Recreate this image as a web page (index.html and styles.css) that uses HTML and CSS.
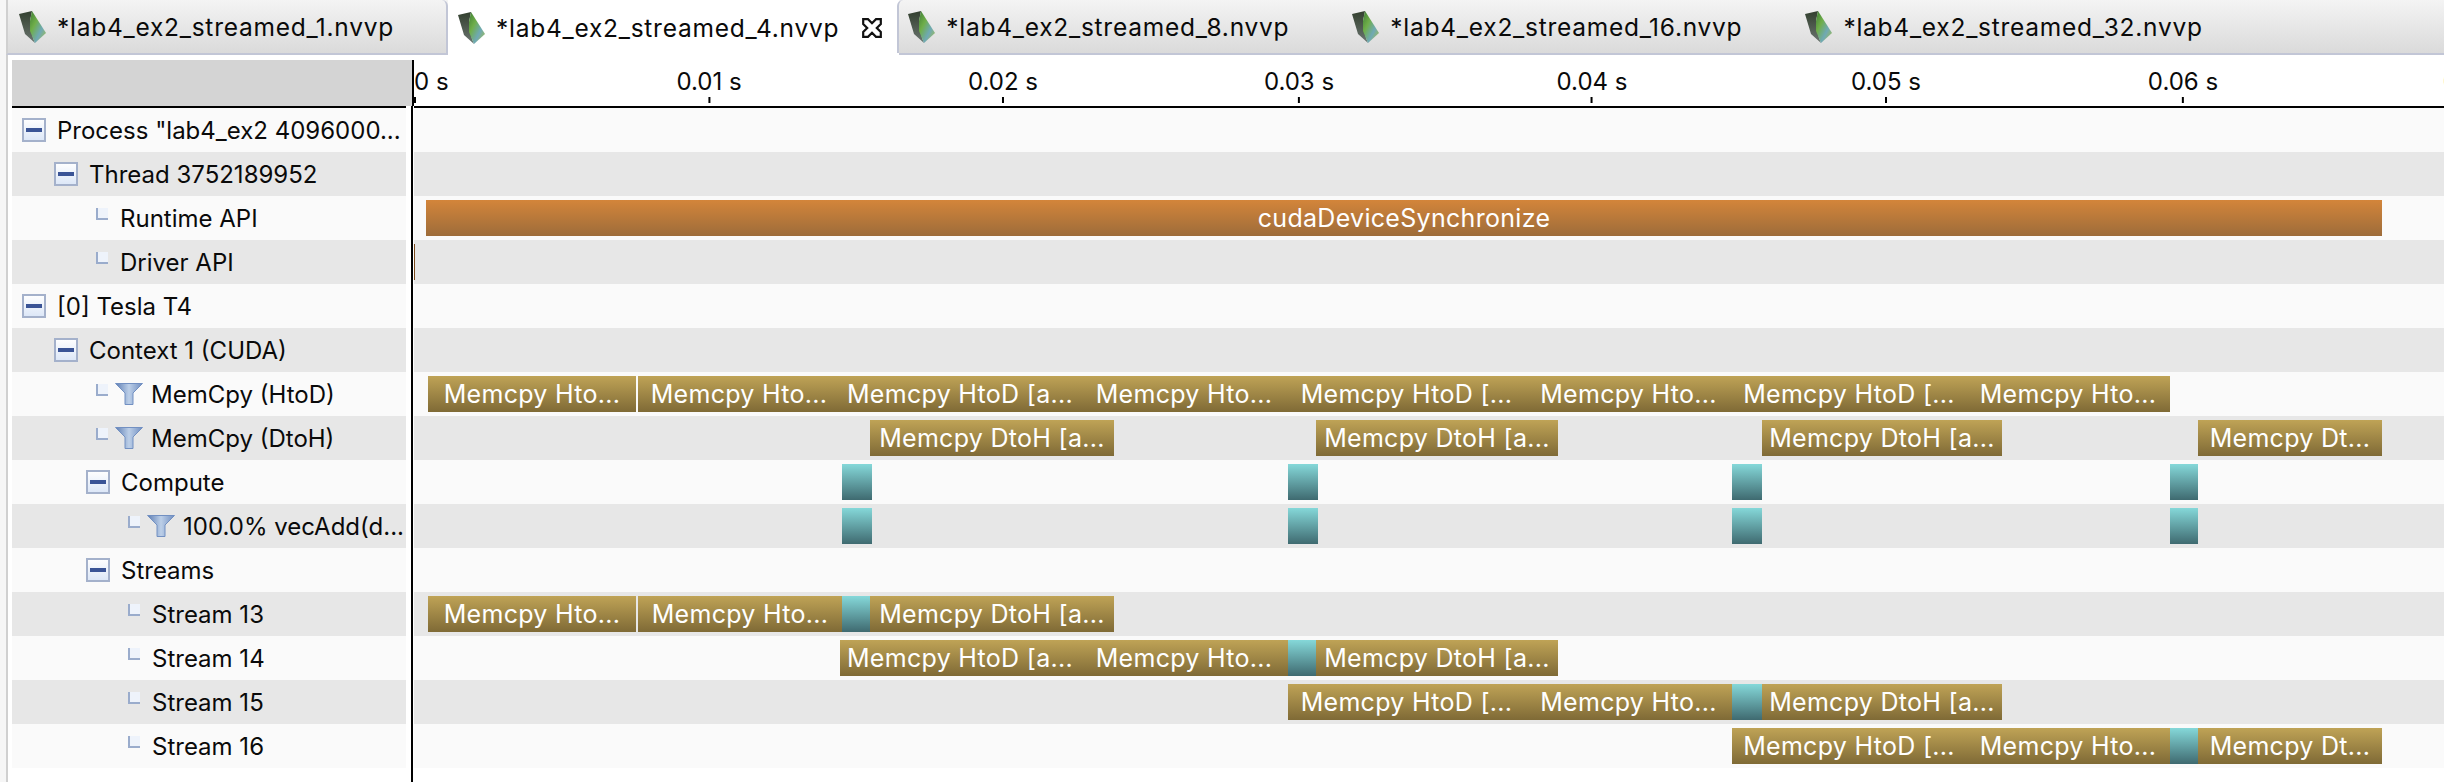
FILE: index.html
```html
<!DOCTYPE html>
<html lang="en">
<head>
    <meta charset="UTF-8">
    <meta name="viewport" content="width=device-width, initial-scale=1.0">
    <title>lab4_ex2_streamed_4.nvvp</title>
    <link rel="stylesheet" href="styles.css">
</head>
<body>
    <!-- shared icons -->
    <svg class="icon-defs" aria-hidden="true">
        <defs>
            <linearGradient id="nvvp-body" x1="0" y1="0" x2="1" y2="1">
                <stop offset="0" stop-color="#3f7f35"/>
                <stop offset="0.35" stop-color="#6fae4a"/>
                <stop offset="0.65" stop-color="#6fa9b5"/>
                <stop offset="1" stop-color="#a9c23a"/>
            </linearGradient>
            <linearGradient id="nvvp-edge" x1="0" y1="0" x2="0" y2="1">
                <stop offset="0" stop-color="#33402f"/>
                <stop offset="1" stop-color="#6b7570"/>
            </linearGradient>
            <linearGradient id="funnel-fill" x1="0" y1="0" x2="1" y2="0">
                <stop offset="0" stop-color="#5d7db3"/>
                <stop offset="0.5" stop-color="#bccfe8"/>
                <stop offset="1" stop-color="#6f8dc0"/>
            </linearGradient>
            <linearGradient id="toggle-fill" x1="0" y1="0" x2="0" y2="1">
                <stop offset="0" stop-color="#ffffff"/>
                <stop offset="1" stop-color="#dbe6f7"/>
            </linearGradient>
        </defs>
        <symbol id="nvvp" viewBox="0 0 28 32">
            <polygon points="1,3 14,0 12,10 15,27 17,32 7,23" fill="url(#nvvp-edge)"/>
            <polygon points="14,0 28,22 17,32 12,20 12,10" fill="url(#nvvp-body)"/>
        </symbol>
        <symbol id="funnel" viewBox="0 0 28 22">
            <polygon points="0.5,0.5 27.5,0.5 18,10 18,21.5 10,21.5 10,10" fill="url(#funnel-fill)" stroke="#7290c2"/>
        </symbol>
        <symbol id="toggle" viewBox="0 0 24 24">
            <rect x="1" y="1" width="22" height="22" fill="url(#toggle-fill)" stroke="#a4b1cb" stroke-width="2"/>
            <rect x="4" y="10" width="16" height="4" fill="#3a5496"/>
        </symbol>
    </svg>

    <div class="tabs">
        <div class="tab tab-first"><svg class="tab-icon"><use href="#nvvp"/></svg>*lab4_ex2_streamed_1.nvvp</div>
        <div class="tab tab-active">
            <svg class="tab-icon"><use href="#nvvp"/></svg>*lab4_ex2_streamed_4.nvvp
            <svg class="tab-close" viewBox="0 0 20 20"><path d="M1.2 1.2H6L10 5.2L14 1.2H18.8V6L14.8 10L18.8 14V18.8H14L10 14.8L6 18.8H1.2V14L5.2 10L1.2 6Z" fill="none" stroke="#111" stroke-width="2.2"/></svg>
        </div>
        <div class="tab tab-next"><svg class="tab-icon"><use href="#nvvp"/></svg>*lab4_ex2_streamed_8.nvvp</div>
        <div class="tab"><svg class="tab-icon"><use href="#nvvp"/></svg>*lab4_ex2_streamed_16.nvvp</div>
        <div class="tab"><svg class="tab-icon"><use href="#nvvp"/></svg>*lab4_ex2_streamed_32.nvvp</div>
    </div>

    <div class="panel">
        <div class="tree">
            <div class="tree-head"></div>
            <div class="tree-rule"></div>

            <div class="row lvl-0"><svg class="toggle"><use href="#toggle"/></svg>Process "lab4_ex2 4096000...</div>
            <div class="row lvl-1"><svg class="toggle"><use href="#toggle"/></svg>Thread 3752189952</div>
            <div class="row lvl-2"><span class="elbow"></span>Runtime API</div>
            <div class="row lvl-2"><span class="elbow"></span>Driver API</div>
            <div class="row lvl-0"><svg class="toggle"><use href="#toggle"/></svg>[0] Tesla T4</div>
            <div class="row lvl-1"><svg class="toggle"><use href="#toggle"/></svg>Context 1 (CUDA)</div>
            <div class="row lvl-2"><span class="elbow"></span><svg class="funnel"><use href="#funnel"/></svg>MemCpy (HtoD)</div>
            <div class="row lvl-2"><span class="elbow"></span><svg class="funnel"><use href="#funnel"/></svg>MemCpy (DtoH)</div>
            <div class="row lvl-2"><svg class="toggle"><use href="#toggle"/></svg>Compute</div>
            <div class="row lvl-3"><span class="elbow"></span><svg class="funnel"><use href="#funnel"/></svg>100.0% vecAdd(d...</div>
            <div class="row lvl-2"><svg class="toggle"><use href="#toggle"/></svg>Streams</div>
            <div class="row lvl-3"><span class="elbow"></span>Stream 13</div>
            <div class="row lvl-3"><span class="elbow"></span>Stream 14</div>
            <div class="row lvl-3"><span class="elbow"></span>Stream 15</div>
            <div class="row lvl-3"><span class="elbow"></span>Stream 16</div>
        </div>

        <div class="chart">
            <div class="axis">
                <span class="tick tick-zero" style="left: 0">0 s</span>
                <span class="tick" style="left: 295px">0.01 s</span>
                <span class="tick" style="left: 589px">0.02 s</span>
                <span class="tick" style="left: 885px">0.03 s</span>
                <span class="tick" style="left: 1178px">0.04 s</span>
                <span class="tick" style="left: 1472px">0.05 s</span>
                <span class="tick" style="left: 1769px">0.06 s</span>
                <span class="tick" style="left: 2063px">0.07 s</span>
            </div>

            <div class="track"></div>
            <div class="track"></div>
            <div class="track">
                <div class="bar runtime" style="left: 12px; width: 1956px">cudaDeviceSynchronize</div>
            </div>
            <div class="track">
                <div class="bar driver" style="left: 0; width: 1px"></div>
            </div>
            <div class="track"></div>
            <div class="track"></div>
            <div class="track">
                <div class="bar memcpy" style="left: 14px; width: 208px">Memcpy Hto...</div>
                <div class="bar memcpy" style="left: 224px; width: 202px">Memcpy Hto...</div>
                <div class="bar memcpy" style="left: 426px; width: 240px">Memcpy HtoD [a...</div>
                <div class="bar memcpy" style="left: 666px; width: 208px">Memcpy Hto...</div>
                <div class="bar memcpy" style="left: 874px; width: 237px">Memcpy HtoD [...</div>
                <div class="bar memcpy" style="left: 1111px; width: 207px">Memcpy Hto...</div>
                <div class="bar memcpy" style="left: 1318px; width: 234px">Memcpy HtoD [...</div>
                <div class="bar memcpy" style="left: 1552px; width: 204px">Memcpy Hto...</div>
            </div>
            <div class="track">
                <div class="bar memcpy" style="left: 456px; width: 244px">Memcpy DtoH [a...</div>
                <div class="bar memcpy" style="left: 902px; width: 242px">Memcpy DtoH [a...</div>
                <div class="bar memcpy" style="left: 1348px; width: 240px">Memcpy DtoH [a...</div>
                <div class="bar memcpy" style="left: 1784px; width: 184px">Memcpy Dt...</div>
            </div>
            <div class="track">
                <div class="bar compute" style="left: 428px; width: 30px"></div>
                <div class="bar compute" style="left: 874px; width: 30px"></div>
                <div class="bar compute" style="left: 1318px; width: 30px"></div>
                <div class="bar compute" style="left: 1756px; width: 28px"></div>
            </div>
            <div class="track">
                <div class="bar compute" style="left: 428px; width: 30px"></div>
                <div class="bar compute" style="left: 874px; width: 30px"></div>
                <div class="bar compute" style="left: 1318px; width: 30px"></div>
                <div class="bar compute" style="left: 1756px; width: 28px"></div>
            </div>
            <div class="track"></div>
            <div class="track">
                <div class="bar memcpy" style="left: 14px; width: 208px">Memcpy Hto...</div>
                <div class="bar memcpy" style="left: 224px; width: 204px">Memcpy Hto...</div>
                <div class="bar compute" style="left: 428px; width: 28px"></div>
                <div class="bar memcpy" style="left: 456px; width: 244px">Memcpy DtoH [a...</div>
            </div>
            <div class="track">
                <div class="bar memcpy" style="left: 426px; width: 240px">Memcpy HtoD [a...</div>
                <div class="bar memcpy" style="left: 666px; width: 208px">Memcpy Hto...</div>
                <div class="bar compute" style="left: 874px; width: 28px"></div>
                <div class="bar memcpy" style="left: 902px; width: 242px">Memcpy DtoH [a...</div>
            </div>
            <div class="track">
                <div class="bar memcpy" style="left: 874px; width: 237px">Memcpy HtoD [...</div>
                <div class="bar memcpy" style="left: 1111px; width: 207px">Memcpy Hto...</div>
                <div class="bar compute" style="left: 1318px; width: 30px"></div>
                <div class="bar memcpy" style="left: 1348px; width: 240px">Memcpy DtoH [a...</div>
            </div>
            <div class="track">
                <div class="bar memcpy" style="left: 1318px; width: 234px">Memcpy HtoD [...</div>
                <div class="bar memcpy" style="left: 1552px; width: 204px">Memcpy Hto...</div>
                <div class="bar compute" style="left: 1756px; width: 28px"></div>
                <div class="bar memcpy" style="left: 1784px; width: 184px">Memcpy Dt...</div>
            </div>
        </div>
    </div>
</body>
</html>
```

FILE: styles.css
```css
html, body {
    height: 100%;
}
body {
    margin: 0;
    display: flex;
    flex-direction: column;
    overflow: hidden;
    font-family: Inter, "Liberation Sans", sans-serif;
    font-size: 24px;
    color: #0a0a0a;
    background-color: #f6f6f6;
}
.icon-defs {
    position: absolute;
    width: 0;
    height: 0;
}

/* tab strip */
.tabs {
    display: flex;
    flex: none;
    height: 53px;
    margin-left: 6px;
    border-left: 2px solid #d0d0d0;
    border-bottom: 2px solid #c2c6d6;
    background: linear-gradient(#f4f4f4, #dadada);
}
.tab {
    display: flex;
    align-items: center;
    padding: 0 52px 0 10px;
    font-size: 24.5px;
    letter-spacing: 0.75px;
    white-space: nowrap;
}
.tab-first {
    border-right: 2px solid #c2c6d6;
    border-top-right-radius: 6px;
}
.tab-active {
    height: 55px;
    padding-right: 17px;
    padding-left: 9px;
    background-color: #fff;
}
.tab-next {
    padding-left: 8px;
    border-left: 2px solid #c2c6d6;
    margin-left: -2px;
    border-top-left-radius: 6px;
}
.tab-icon {
    width: 28px;
    height: 32px;
    margin-right: 11px;
}
.tab-close {
    width: 20px;
    height: 20px;
    margin-left: 23px;
}

/* tree + timeline */
.panel {
    display: flex;
    flex: 1;
    min-height: 0;
    margin-left: 6px;
    padding: 5px 0 0 4px;
    border-left: 2px solid #d0d0d0;
    background-color: #fff;
}
.tree {
    flex: none;
    width: 399px;
    border-right: 2px solid #000;
}
.tree-head {
    width: 400px;
    height: 46px;
    background-color: #d4d4d4;
    border-right: 2px solid #000;
    position: relative;
}
.tree-rule {
    width: 394px;
    height: 2px;
    background-color: #000;
}
.row {
    display: flex;
    align-items: center;
    width: 394px;
    height: 44px;
    white-space: nowrap;
    box-sizing: border-box;
}
.row:nth-child(odd) {
    background-color: #fafafa;
}
.row:nth-child(even) {
    background-color: #e7e7e7;
}
.lvl-0 { padding-left: 10px; }
.lvl-1 { padding-left: 42px; }
.lvl-2 { padding-left: 74px; }
.lvl-3 { padding-left: 106px; }
.toggle {
    flex: none;
    width: 24px;
    height: 24px;
    margin-right: 11px;
}
.elbow {
    flex: none;
    box-sizing: border-box;
    width: 12px;
    height: 12px;
    margin: -8px 12px 0 10px;
    border-left: 2px solid #9aaccc;
    border-bottom: 2px solid #9aaccc;
    background-color: #eef3fb;
}
.funnel {
    flex: none;
    width: 28px;
    height: 22px;
    margin: 0 8px 0 -5px;
}

.chart {
    flex: 1;
    min-width: 0;
    margin-left: 1px;
    overflow: hidden;
}
.axis {
    position: relative;
    height: 46px;
    background-color: #fff;
    border-bottom: 2px solid #000;
}
.tick {
    position: absolute;
    top: 7px;
    transform: translateX(-50%);
    white-space: nowrap;
}
.tick::after {
    content: "";
    position: absolute;
    left: 50%;
    top: 30px;
    width: 2px;
    height: 6px;
    margin-left: -1px;
    background-color: #000;
}
.tick-zero {
    transform: none;
}
.tick-zero::after {
    left: 0;
    margin-left: 0;
}
.track {
    position: relative;
    height: 44px;
}
.track:nth-child(even) {
    background-color: #fafafa;
}
.track:nth-child(odd) {
    background-color: #e7e7e7;
}
.bar {
    position: absolute;
    top: 4px;
    height: 36px;
    font-size: 25px;
    letter-spacing: 0.3px;
    line-height: 36px;
    text-align: center;
    color: #fff;
    white-space: nowrap;
    overflow: hidden;
}
.runtime {
    background: linear-gradient(#d3853a, #9d6c3a);
}
.driver {
    background-color: #7a4a1c;
}
.memcpy {
    background: linear-gradient(#bfa356, #7f6a36);
}
.compute {
    background: linear-gradient(#85d8d9, #3f6a70);
}
```
